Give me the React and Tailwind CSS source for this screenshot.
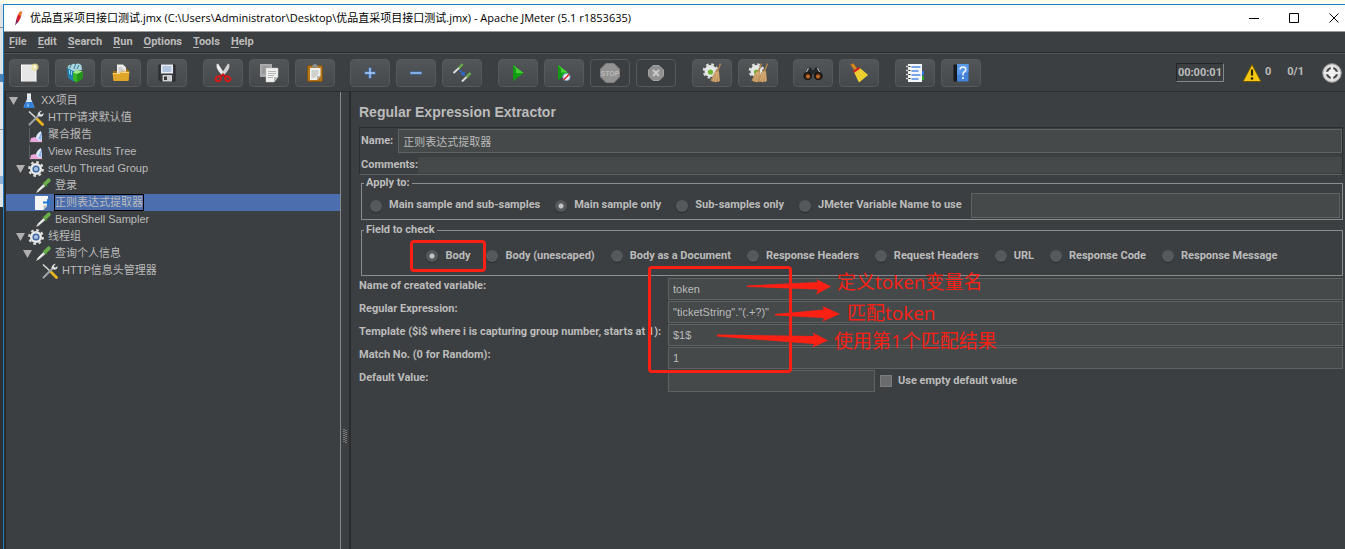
import React from "react";

const Svg = ({ children, className = "h-5 w-5 shrink-0", box = "0 0 20 20" }) => (
  <svg viewBox={box} className={className} fill="none" aria-hidden="true">
    {children}
  </svg>
);

const NewIcon = () => (
  <Svg>
    <rect x="2.500" y="2" width="14.500" height="16.500" fill="#e6e6e6" stroke="#fbfbfb" />
    <path d="M2 18.500h15.500" stroke="#a5a5a5" />
    <circle cx="16" cy="4" r="3.600" fill="#efe08a" opacity=".75" />
    <circle cx="16" cy="4" r="1.700" fill="#fffbe0" />
  </Svg>
);
const TemplatesIcon = () => (
  <Svg>
    <path d="M2 4.500 9 7v12l-6-4z" fill="#1f7fae" />
    <path d="M2.500 5Q3 1 6.500 2q1-2 4-1 4-1.500 6 1.500l.5 4.500-8 1.500z" fill="#a9d3de" />
    <path d="m6 2-1.500 3M10.500 1 9 6M14 2l-2 4" stroke="#3b7f97" />
    <path d="M4.500 7v4M6.500 8v4" stroke="#8fd4ee" />
    <path d="m8 9.500 4-2.500 5.500 1.500L18 15l-6.500 4.500L8 17z" fill="#35b526" />
    <path d="m8 9.500 4 1.500 5.500-2.500L12 7z" fill="#a5ea8e" />
    <path d="M12 11v8.300l6-4.300-.5-6.500z" fill="#23951b" />
  </Svg>
);
const OpenIcon = () => (
  <Svg>
    <path d="M2 8h4l1-2h10l1 3v8H2z" fill="#9a6a0d" />
    <path d="M6 1.500h6l3 3V12H6z" fill="#ececec" />
    <path d="M7.500 5h4M7.500 7h6M7.500 9h6" stroke="#a0a0a0" strokeWidth=".8" />
    <path d="M1.500 10h7L10 8.500h8.500L17.500 18h-15z" fill="#e0a62c" />
    <path d="M2 10.500h7l1-1h8" stroke="#f6d583" />
  </Svg>
);
const SaveIcon = () => (
  <Svg>
    <path d="M2 2h16v16H3.500L2 16.500z" fill="#37393c" stroke="#222427" />
    <rect x="4" y="1.500" width="12" height="9" fill="#e9eef5" />
    <path d="M5.500 4h9M5.500 6h9M5.500 8h9" stroke="#7f9cc9" />
    <path d="M5.500 12h9.500v6.500H5.500z" fill="#cfcfcf" />
    <path d="M7 13.500h3V17H7z" fill="#3a3a3a" />
  </Svg>
);
const CutIcon = () => (
  <Svg>
    <path d="M3.500 1.500 5 .5l7 11-2.500 1.500-4-5Q3 4.500 3.500 1.500z" fill="#ededed" />
    <path d="M16.500 1.500 15 .5l-7 11 2.500 1.500 4-5Q17 4.500 16.500 1.500z" fill="#cfd1d2" />
    <path d="m10.500 11-4 3.500M9.500 11l4 3.500" stroke="#c31515" strokeWidth="2" />
    <ellipse cx="5.200" cy="15.800" rx="2.600" ry="2.200" stroke="#dd1616" strokeWidth="1.900" transform="rotate(-35 5.200 15.800)" />
    <ellipse cx="14.800" cy="15.800" rx="2.600" ry="2.200" stroke="#dd1616" strokeWidth="1.900" transform="rotate(35 14.800 15.800)" />
  </Svg>
);
const CopyIcon = () => (
  <Svg>
    <path d="M1 1h12v13H1z" fill="#aaabac" />
    <path d="M3 4h8M3 6h8M3 8h8M3 10h8" stroke="#808283" strokeWidth=".8" />
    <path d="M7 5h12v9l-4 5H7z" fill="#f0f0ee" stroke="#c8c8c6" strokeWidth=".5" />
    <path d="M9 8.500h8M9 10.500h8M9 12.500h6M9 14.500h5" stroke="#a6a6a6" strokeWidth=".8" />
    <path d="M19 14h-4v5z" fill="#b9b9b7" />
  </Svg>
);
const PasteIcon = () => (
  <Svg>
    <rect x="2.500" y="2.500" width="15" height="16" rx="1.500" fill="#b3761d" stroke="#835310" />
    <path d="M5 5h10.500v8l-3.500 4H5z" fill="#f0f0ec" />
    <path d="M6.500 8h7M6.500 10h7M6.500 12h6M6.500 14h4" stroke="#a0a09c" strokeWidth=".8" />
    <path d="M6.500 4.500 8 2q2-2 4 0l1.500 2.500z" fill="#8d9193" />
    <path d="M15.500 13H12v4z" fill="#b5b5b0" />
  </Svg>
);
const PlusIcon = () => (
  <Svg>
    <path d="M10 4.500v11M4.500 10h11" stroke="#4576bd" strokeWidth="3" />
    <path d="M10 5v10M5 10h10" stroke="#a9cbf3" strokeWidth="1.300" />
  </Svg>
);
const MinusIcon = () => (
  <Svg>
    <path d="M4 10h12" stroke="#4576bd" strokeWidth="3" />
    <path d="M4.500 10h11" stroke="#a9cbf3" strokeWidth="1.300" />
  </Svg>
);
const ToggleIcon = () => (
  <Svg>
    <path d="m1.500 10 6-5.500" stroke="#d9dcd6" strokeWidth="2" />
    <path d="m7 5 3.500-4" stroke="#66a94b" strokeWidth="2.500" />
    <path d="m10 18.500 5-5" stroke="#d9dcd6" strokeWidth="2" />
    <path d="m14.500 14 4-4" stroke="#66a94b" strokeWidth="2.500" />
    <path d="m7.500 7 3 3" stroke="#2a6bd2" strokeWidth="1.400" />
    <path d="M13 12.500 8.500 12 12.500 8z" fill="#2a6bd2" />
  </Svg>
);
const PlayIcon = () => (
  <Svg>
    <path d="M5 2v16l10.500-8z" fill="#0fa40f" />
    <path d="M5 2v8h10.500z" fill="#48cf38" />
    <path d="M5 2v16l3-2.300V6z" fill="#149914" />
  </Svg>
);
const PlayNoPauseIcon = () => (
  <Svg>
    <path d="M4 2v15l10-7.500z" fill="#0fa40f" />
    <path d="M4 2v7.500h10z" fill="#48cf38" />
    <path d="M4 2v15l3-2.300V6z" fill="#149914" />
    <circle cx="12.500" cy="14" r="3.600" fill="#e9f2fb" stroke="#78a2ce" />
    <path d="m9.800 16.700 5.400-5.400" stroke="#e02020" strokeWidth="1.600" />
  </Svg>
);
const StopIcon = () => (
  <Svg>
    <path d="M6 .5h8L19.500 6v8L14 19.500H6L.5 14V6z" fill="#929292" stroke="#7e7e7e" />
    <text x="10" y="12.700" textAnchor="middle" fontSize="7" fontWeight="700" fontFamily="Liberation Sans, sans-serif" fill="#b9b9b9">STOP</text>
  </Svg>
);
const ShutdownIcon = () => (
  <Svg>
    <path d="M7 2.500h6L17.500 7v6L13 17.500H7L2.500 13V7z" fill="#909090" stroke="#a1a1a1" />
    <path d="m7 7 6 6M13 7l-6 6" stroke="#c9c9c9" strokeWidth="2.200" />
  </Svg>
);
const GearShape = () => (
  <g>
    <circle cx="8.500" cy="8" r="6" fill="#e6e8e7" />
    <circle cx="8.500" cy="8" r="6.500" stroke="#dcdedd" strokeWidth="2.600" strokeDasharray="2.550 2.550" />
    <circle cx="8.500" cy="9" r="2.600" fill="#6cb52d" />
  </g>
);
const Broom = ({ shift = 0 }) => (
  <g transform={`translate(${shift} 0)`}>
    <path d="m18.500 .5-3 8" stroke="#a8814f" strokeWidth="1.500" />
    <path d="M13.500 7.500H17l1 10.500q-5 2.500-9.500-.5z" fill="#bd9058" />
    <path d="m14 9-3 9M15 9l-1.500 10M16 9l.5 9.500" stroke="#e2c08f" strokeWidth=".7" />
  </g>
);
const ClearIcon = () => (
  <Svg>
    <GearShape />
    <Broom />
  </Svg>
);
const ClearAllIcon = () => (
  <Svg>
    <GearShape />
    <Broom shift={-5} />
    <Broom shift={1} />
  </Svg>
);
const BinocularsIcon = () => (
  <Svg>
    <path d="M5 4.500h3L9 7h2l1-2.500h3L19.500 12v3h-8L11 11H9l-.5 4h-8v-3z" fill="#25282a" />
    <path d="m5.500 5-3 6M14.500 5l3 6" stroke="#b4b8ba" strokeWidth="1.100" />
    <circle cx="4.700" cy="13" r="3.700" fill="#3a2214" stroke="#111" />
    <circle cx="15.300" cy="13" r="3.700" fill="#3a2214" stroke="#111" />
    <circle cx="5" cy="13.500" r="2" fill="#c06a28" />
    <circle cx="15" cy="13.500" r="2" fill="#c06a28" />
  </Svg>
);
const YellowBroomIcon = () => (
  <Svg>
    <path d="m1.500 1.500 3-1 3.500 5-2.500 2z" fill="#d58a25" stroke="#a86312" strokeWidth=".6" />
    <path d="m5 9 6-4 8 7-9 7.500Z" fill="#f4d634" />
    <path d="m7 9 5 8M9 8l5.500 7M11 7l6 6" stroke="#cfae1f" strokeWidth=".7" />
    <path d="m4.500 8.800 6-4" stroke="#d52020" strokeWidth="2.200" />
  </Svg>
);
const ListIcon = () => (
  <Svg>
    <path d="M15 8h4v4h-4z" fill="#2d73dd" />
    <path d="M15 13h4v4h-4z" fill="#28a529" />
    <path d="M3 1h14v18H3z" fill="#f4f6f8" />
    <path d="M6.500 4h9M6.500 8h7M6.500 12h9M6.500 16h7" stroke="#4d8ae0" strokeWidth="1.300" />
    <path d="M1 3.500h4M1 7.500h4M1 11.500h4M1 15.500h4" stroke="#cfd2d4" strokeWidth="1.500" />
    <path d="M3.500 3.500h2M3.500 7.500h2M3.500 11.500h2M3.500 15.500h2" stroke="#333" strokeWidth="1" />
  </Svg>
);
const HelpIcon = () => (
  <Svg>
    <path d="M2.500 1.500H7v17H2.500z" fill="#15191d" />
    <path d="M6 1h11.500v17.500H6z" fill="#4384da" />
    <path d="M6 1h11.500v8L6 12z" fill="#5b9aea" />
    <path d="M9 6.500q.3-2.500 3-2.500t2.800 2.500q0 1.600-1.500 2.500T12 11.500v1" stroke="#f2f7ff" strokeWidth="1.500" />
    <circle cx="12" cy="15" r="1.100" fill="#f2f7ff" />
  </Svg>
);

const toolGroups = [
  [["New", NewIcon], ["Templates", TemplatesIcon], ["Open", OpenIcon], ["Save", SaveIcon]],
  [["Cut", CutIcon], ["Copy", CopyIcon], ["Paste", PasteIcon]],
  [["Expand all", PlusIcon], ["Collapse all", MinusIcon], ["Toggle", ToggleIcon]],
  [["Start", PlayIcon], ["Start no pauses", PlayNoPauseIcon], ["Stop", StopIcon, true], ["Shutdown", ShutdownIcon, true]],
  [["Clear", ClearIcon], ["Clear all", ClearAllIcon]],
  [["Search", BinocularsIcon], ["Reset search", YellowBroomIcon]],
  [["Function helper", ListIcon], ["Help", HelpIcon]],
];

const TREE_ICON = "h-4 w-4 shrink-0";
const treeIcons = {
  flask: (
    <Svg className={TREE_ICON} box="0 0 16 16">
      <path d="M6 1h4v5l3.500 8.500h-11L6 6z" fill="#dfe9f2" />
      <path d="m4.500 9-2 6h11l-2-6z" fill="#2f7fd6" />
      <path d="m7 9.500-1 4h2z" fill="#a8d0f8" />
      <path d="M6 1h4" stroke="#fff" />
    </Svg>
  ),
  tools: (
    <Svg className={TREE_ICON} box="0 0 16 16">
      <path d="M1 1.500 8 8" stroke="#d8d8d8" strokeWidth="1.600" />
      <path d="m8.500 8.500 6 6" stroke="#eab41c" strokeWidth="2.800" strokeLinecap="round" />
      <path d="M1.500 14.500 11 5" stroke="#9fa3a5" strokeWidth="2" strokeLinecap="round" />
      <path d="M14 .8 11.800 3l.7 1.200 1.200.3L15.500 3q.5 3.500-3.500 3.800L9.500 5Q10 1 14 .8z" fill="#e0e2e3" />
    </Svg>
  ),
  report: (
    <Svg className={TREE_ICON} box="0 0 16 16">
      <path d="M1.500 1v14H15" stroke="#5d6164" />
      <path d="m2 15 1-4 4-1 3 2 4-4v7z" fill="#eba6da" />
      <path d="M8 11q0-4 5-7l1 9-3 1z" fill="#dcecff" />
      <path d="m10 12 3.500-7v8z" fill="#8cb6ea" />
    </Svg>
  ),
  gear: (
    <Svg className={TREE_ICON} box="0 0 16 16">
      <circle cx="8" cy="8" r="6.800" stroke="#dcdcdc" strokeWidth="2.200" strokeDasharray="2.670 2.670" />
      <circle cx="8" cy="8" r="5" fill="#dce4ee" stroke="#e9e9e9" strokeWidth="2" />
      <circle cx="8" cy="8" r="2.800" fill="#a9c3e4" stroke="#42699d" strokeWidth="1.500" />
    </Svg>
  ),
  dropper: (
    <Svg className={TREE_ICON} box="0 0 16 16">
      <path d="m1 15 1.500-3 6-6L10.500 8l-6.500 5.500z" fill="#d4d8d2" />
      <path d="m3.500 12 5-4.500" stroke="#fff" />
      <path d="m8 4.500 4 4" stroke="#3f7d2c" strokeWidth="1.600" />
      <path d="m10.500 5.500 3.200-3.200" stroke="#69b04b" strokeWidth="3.800" strokeLinecap="round" />
    </Svg>
  ),
  extract: (
    <Svg className={TREE_ICON} box="0 0 16 16">
      <path d="M0 1h13v9l-4.500 5H0z" fill="#f5f5f5" />
      <path d="M13 10 8.500 10.500V15z" fill="#bdbdbd" />
      <path d="M8 6.500h4V3.500l4 4-4 4V8.500H8z" fill="#2178d4" />
    </Svg>
  ),
};

const indents = ["pl-[3px]", "pl-[10px]", "pl-[17px]", "pl-6"];
const tree = [
  { level: 0, icon: "flask", text: "XX项目", open: true },
  { level: 1, icon: "tools", text: "HTTP请求默认值" },
  { level: 1, icon: "report", text: "聚合报告" },
  { level: 1, icon: "report", text: "View Results Tree" },
  { level: 1, icon: "gear", text: "setUp Thread Group", open: true },
  { level: 2, icon: "dropper", text: "登录" },
  { level: 2, icon: "extract", text: "正则表达式提取器", selected: true },
  { level: 2, icon: "dropper", text: "BeanShell Sampler" },
  { level: 1, icon: "gear", text: "线程组", open: true },
  { level: 2, icon: "dropper", text: "查询个人信息", open: true },
  { level: 3, icon: "tools", text: "HTTP信息头管理器" },
];

function TreeRow({ level, icon, text, open, selected }) {
  return (
    <li className={`flex h-[17px] items-center gap-[3px] ${indents[level]} ${selected ? "bg-[#4b6eaf]" : ""}`}>
      <svg viewBox="0 0 9 9" className="h-[9px] w-[9px] shrink-0" aria-hidden="true">
        {open && <path d="M0 1h9L4.500 9z" fill="#b0b0b0" />}
      </svg>
      {treeIcons[icon]}
      <span className={`flex h-[17px] items-center border whitespace-nowrap ${selected ? "border-black" : "border-transparent"}`}>
        {text}
      </span>
    </li>
  );
}

function Radio({ name, label, checked, mark }) {
  return (
    <label className="relative flex shrink-0 items-center gap-[7px] whitespace-nowrap">
      <input
        type="radio"
        name={name}
        defaultChecked={checked}
        className="h-3 w-3 appearance-none rounded-full bg-[#55595b] shadow-[0_1px_1px_#2b2d2e] checked:bg-[radial-gradient(circle,#c4c4c4_0_2px,#55595b_3px)]"
      />
      {label}
      {mark && <span className="absolute -top-2 -right-4 -bottom-2 -left-4 rounded-sm border-[3px] border-[#fb2014]" />}
    </label>
  );
}

const field =
  "border border-[#5f6263] bg-[#45494a] px-1 font-['Liberation_Sans','Noto_Sans_CJK_SC',sans-serif] font-normal text-[#bbbbbb] outline-none";

const variables = [
  ["var", "Name of created variable:", "token"],
  ["regex", "Regular Expression:", '"ticketString"."(.+?)"'],
  ["template", "Template ($i$ where i is capturing group number, starts at 1):", "$1$"],
  ["match", "Match No. (0 for Random):", "1"],
];

const note =
  "absolute font-['Open_Sans','Noto_Sans_CJK_SC',sans-serif] text-[19px] leading-6 font-normal whitespace-nowrap text-[#fb2014]";

export default function App() {
  return (
    <div className="flex h-screen flex-col overflow-hidden bg-[#fdfdec] pt-1 font-[Roboto,'Liberation_Sans','Noto_Sans_CJK_SC',sans-serif] text-[11px] text-[#bbbbbb]">
      <div className="flex min-h-0 flex-1">
        <div className="flex w-[3px] shrink-0 flex-col bg-[#2d3032]">
          <div className="flex h-[203px] flex-col justify-around bg-[#dfe3e6]">
            <span className="h-px bg-[#8a8f93]" />
            <span className="h-2 bg-[#4b81b4]" />
            <span className="h-px bg-[#8a8f93]" />
            <span className="h-2 bg-[#8fb2d6]" />
          </div>
        </div>
        <div className="flex min-w-0 flex-1 flex-col border-t border-l border-[#1c7cc4] bg-[#3c3f41]">
          <header className="flex h-[27px] shrink-0 items-center border-b border-[#9b9b9b] bg-white pr-1.5 pl-2 font-['Open_Sans','Noto_Sans_CJK_SC',sans-serif] text-black">
            <svg viewBox="0 0 12 16" className="h-4 w-3 shrink-0" aria-hidden="true">
              <path d="M9.500 1Q5 3 4 12l2 .5Q10 7 9.500 1z" fill="#d3212f" />
              <path d="M9.500 1Q7 2 6 5l3 1q1-3 .5-5z" fill="#ee7a26" />
              <path d="M4.500 9 3 15.500 6 12z" fill="#73205f" />
            </svg>
            <h1 className="ml-1.5 truncate text-[11px]">优品直采项目接口测试.jmx (C:\Users\Administrator\Desktop\优品直采项目接口测试.jmx) - Apache JMeter (5.1 r1853635)</h1>
            <div className="ml-auto flex items-center gap-[30px]">
              <button aria-label="Minimize">
                <Svg className="h-[10px] w-[10px]" box="0 0 10 10"><path d="M0 5.500h10" stroke="#000" /></Svg>
              </button>
              <button aria-label="Maximize">
                <Svg className="h-[10px] w-[10px]" box="0 0 10 10"><path d="M.5.5h9v9h-9z" stroke="#000" /></Svg>
              </button>
              <button aria-label="Close">
                <Svg className="h-[10px] w-[10px]" box="0 0 10 10"><path d="m.5.5 9 9M9.500.5l-9 9" stroke="#000" /></Svg>
              </button>
            </div>
          </header>

          <nav className="flex h-[21px] shrink-0 items-center gap-[11px] border-b border-[#27292a] pl-[5px] font-bold">
            {["File", "Edit", "Search", "Run", "Options", "Tools", "Help"].map((m) => (
              <button key={m} className="leading-4">
                <span className="underline underline-offset-2">{m[0]}</span>
                {m.slice(1)}
              </button>
            ))}
          </nav>

          <div className="flex h-[38px] shrink-0 items-center justify-between border-t border-[#535657] pr-[3px] pl-[5px]">
            <div className="flex w-[972px] shrink-0 justify-between">
              {toolGroups.map((group, i) => (
                <div key={i} className="flex gap-1.5">
                  {group.map(([label, Icon, disabled]) => (
                    <button
                      key={label}
                      aria-label={label}
                      disabled={disabled}
                      className="flex h-7 w-10 items-center justify-center rounded-sm border border-[#55595b] bg-linear-to-b from-[#525658] to-[#45494b] disabled:bg-none"
                    >
                      <Icon />
                    </button>
                  ))}
                </div>
              ))}
            </div>
            <div className="flex items-center">
              <output className="mr-[18px] border border-t-[#232526] border-r-[#85888a] border-b-[#85888a] border-l-[#232526] px-px font-bold leading-[17px]">
                00:00:01
              </output>
              <Svg>
                <path d="M10 1.500 19 18.500H1z" fill="#f3c714" stroke="#6e5908" strokeLinejoin="round" />
                <path d="M10 6.500v6" stroke="#2d2503" strokeWidth="2.200" />
                <circle cx="10" cy="15.500" r="1.300" fill="#2d2503" />
              </Svg>
              <span className="ml-[3px] font-bold">0</span>
              <span className="mr-[18px] ml-4 font-bold">0/1</span>
              <Svg>
                <circle cx="10" cy="10" r="9.300" fill="#dadada" stroke="#9b9b9b" />
                <circle cx="10" cy="10" r="5" stroke="#3d3f40" strokeWidth="2.200" />
                <path d="M10 2v16M2 10h16" stroke="#ececec" strokeWidth="2.600" />
                <circle cx="10" cy="10" r="3.200" fill="#f2f2f2" />
              </Svg>
            </div>
          </div>

          <div className="flex min-h-0 flex-1 border-t border-[#2a2c2d]">
            <aside className="w-[337px] shrink-0 border-r border-l-2 border-r-[#85888a] border-l-[#2a2c2d] font-['Liberation_Sans','Noto_Sans_CJK_SC',sans-serif]">
              <ul>
                {tree.map((row) => (
                  <TreeRow key={row.text} {...row} />
                ))}
              </ul>
            </aside>
            <div className="flex w-2 shrink-0 items-end justify-center pb-[106px]">
              <svg viewBox="0 0 4 14" className="h-[14px] w-1" aria-hidden="true">
                <path d="M1 0v14M3 1v13" stroke="#b5b5b5" strokeDasharray="1 1" />
              </svg>
            </div>

            <main className="min-w-0 flex-1 border-l-2 border-[#2a2c2d] pt-[10px] pr-[2px] pl-2 font-bold">
              <h2 className="font-['Liberation_Sans',sans-serif] text-sm leading-5 font-bold">Regular Expression Extractor</h2>
              <div className="mt-[5px] flex flex-col gap-1 border border-t-[#2b2d2e] border-r-[#2b2d2e] border-b-[#5f6263] border-l-[#2b2d2e] py-px pl-px">
                <label className="flex h-6 items-center gap-[5px]">
                  Name:
                  <input className={`${field} h-6 min-w-0 flex-1`} defaultValue="正则表达式提取器" />
                </label>
                <label className="flex h-4 items-center">
                  Comments:
                  <input className="h-4 min-w-0 flex-1 bg-[#45494a] px-1 font-normal outline-none" />
                </label>
              </div>

              <fieldset className="mt-px ml-[2px] border border-[#8a8c8d]">
                <legend className="ml-[2px] px-0.5 leading-[14px]">Apply to:</legend>
                <div className="mt-[3px] mb-px flex items-center gap-[15px] pr-[2px] pl-2">
                  <Radio name="scope" label="Main sample and sub-samples" />
                  <Radio name="scope" label="Main sample only" checked />
                  <Radio name="scope" label="Sub-samples only" />
                  <div className="flex min-w-0 flex-1 items-center gap-[9px]">
                    <Radio name="scope" label="JMeter Variable Name to use" />
                    <input aria-label="JMeter variable name" className={`${field} h-[25px] min-w-0 flex-1`} />
                  </div>
                </div>
              </fieldset>

              <fieldset className="mt-[3px] ml-[2px] border border-[#8a8c8d]">
                <legend className="ml-[2px] px-0.5 leading-[14px]">Field to check</legend>
                <div className="flex h-[38px] items-center justify-center gap-4">
                  <Radio name="target" label="Body" checked mark />
                  <Radio name="target" label="Body (unescaped)" />
                  <Radio name="target" label="Body as a Document" />
                  <Radio name="target" label="Response Headers" />
                  <Radio name="target" label="Request Headers" />
                  <Radio name="target" label="URL" />
                  <Radio name="target" label="Response Code" />
                  <Radio name="target" label="Response Message" />
                </div>
              </fieldset>

              <div className="relative mt-[2px] grid grid-cols-[309px_1fr] gap-y-px">
                {variables.map(([id, label, value]) => (
                  <React.Fragment key={id}>
                    <label htmlFor={id} className="leading-4 whitespace-nowrap">{label}</label>
                    <input id={id} className={`${field} h-[22px] w-full`} defaultValue={value} />
                  </React.Fragment>
                ))}
                <label htmlFor="default" className="leading-4">Default Value:</label>
                <div className="flex items-center gap-[5px]">
                  <input id="default" className={`${field} h-[22px] w-[207px]`} />
                  <label className="flex items-center gap-1.5">
                    <input type="checkbox" className="h-3 w-3 appearance-none border border-[#7a7c7d] bg-[#696b6c]" />
                    Use empty default value
                  </label>
                </div>

                <div className="pointer-events-none absolute inset-0">
                  <div className="absolute -top-3 left-[289px] h-[107px] w-36 rounded-sm border-[3px] border-[#fb2014]" />
                  <svg viewBox="0 0 130 80" className="absolute top-0 left-[355px] h-20 w-[130px]" aria-hidden="true">
                    <g fill="#fb2014">
                      <path d="M33 7.500 104 4 102 1 117 8.500 102 16.500 104 11.500 33 9z" />
                      <path d="M61 36 110 31.500 108.500 28 126 36 108.500 43.500 110 40 61 37.500z" />
                      <path d="M3 56.500 100 58 98.500 54.500 114 62.500 98.500 69.500 100 66 3 58.500z" />
                    </g>
                  </svg>
                  <p className={`${note} -top-2 left-[478px]`}>定义token变量名</p>
                  <p className={`${note} top-[23px] left-[488px]`}>匹配token</p>
                  <p className={`${note} top-[51px] left-[475px]`}>使用第1个匹配结果</p>
                </div>
              </div>
            </main>
          </div>
        </div>
      </div>
    </div>
  );
}
